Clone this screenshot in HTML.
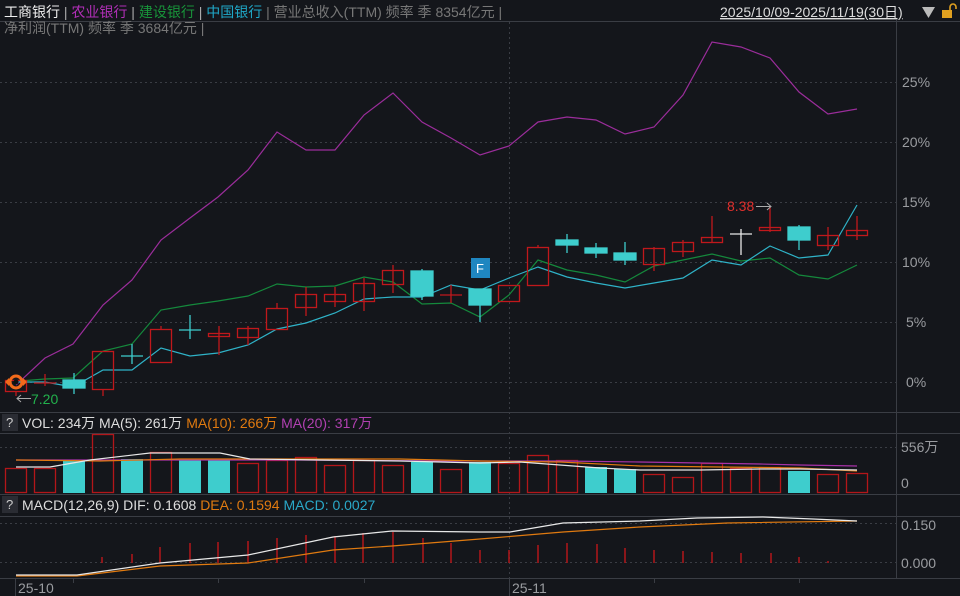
<!DOCTYPE html>
<html><head><meta charset="utf-8"><style>
body{margin:0;background:#14161b;width:960px;height:596px;overflow:hidden;font-family:"Liberation Sans","Noto Sans CJK SC",sans-serif}
.t{position:absolute;white-space:nowrap;font-size:14px;line-height:16px}
</style></head><body>
<svg width="960" height="596" style="position:absolute;left:0;top:0" xmlns="http://www.w3.org/2000/svg" font-family="Liberation Sans, Noto Sans CJK SC, sans-serif">
<rect width="960" height="596" fill="#14161b"/>
<g stroke="#3a3d44" stroke-width="1">
<line x1="896.5" y1="20" x2="896.5" y2="578"/>
<line x1="0" y1="21.5" x2="960" y2="21.5"/>
<line x1="0" y1="412.5" x2="960" y2="412.5"/>
<line x1="0" y1="433.5" x2="960" y2="433.5"/>
<line x1="0" y1="494.5" x2="960" y2="494.5"/>
<line x1="0" y1="516.5" x2="960" y2="516.5"/>
<line x1="0" y1="578.5" x2="960" y2="578.5"/>
<line x1="15.5" y1="578" x2="15.5" y2="596"/>
<line x1="73.5" y1="578" x2="73.5" y2="583"/>
<line x1="218.5" y1="578" x2="218.5" y2="583"/>
<line x1="364.5" y1="578" x2="364.5" y2="583"/>
<line x1="509.5" y1="578" x2="509.5" y2="596"/>
<line x1="654.5" y1="578" x2="654.5" y2="583"/>
<line x1="799.5" y1="578" x2="799.5" y2="583"/>
</g>
<g stroke="#3a3d44" stroke-dasharray="2,3">
<line x1="0" y1="82.5" x2="896" y2="82.5"/><line x1="0" y1="142.5" x2="896" y2="142.5"/>
<line x1="0" y1="202.5" x2="896" y2="202.5"/><line x1="0" y1="262.5" x2="896" y2="262.5"/>
<line x1="0" y1="322.5" x2="896" y2="322.5"/><line x1="0" y1="382.5" x2="896" y2="382.5"/>
<line x1="0" y1="447.5" x2="896" y2="447.5"/>
<line x1="0" y1="523.5" x2="896" y2="523.5"/><line x1="0" y1="562.5" x2="896" y2="562.5"/>
<line x1="509.5" y1="22" x2="509.5" y2="578"/>
</g>
<g fill="#9a9ca0" font-size="14">
<text x="902" y="87">25%</text><text x="902" y="147">20%</text><text x="902" y="207">15%</text>
<text x="902" y="267">10%</text><text x="906" y="327">5%</text><text x="906" y="387">0%</text>
<text x="901" y="452">556万</text><text x="901" y="488">0</text>
<text x="901" y="530">0.150</text><text x="901" y="568">0.000</text>
<text x="18" y="593">25-10</text><text x="512" y="593">25-11</text>
</g>
<!-- lines -->
<polyline fill="none" stroke="#9b2d9b" stroke-width="1.2" points="16,385 45,358 73,344 103,305 132,280 161,240 190,218 218,197 248,170 277,132 306,150 335,150 364,115 393,93 422,122 451,138 480,155 509,146 538,122 567,117 596,120 625,134 654,127 683,95 712,42 741,47 770,58 799,92 828,114 857,109"/>
<polyline fill="none" stroke="#14893c" stroke-width="1.2" points="20,381 45,379 73,378 103,351 132,344 161,310 190,305 218,301 248,296 277,284 306,287 335,286 364,277 393,282 422,304 451,303 480,317 509,295 538,260 567,270 596,275 625,282 654,266 683,260 712,254 741,261 770,258 799,275 828,279 857,265"/>
<polyline fill="none" stroke="#2fb3c8" stroke-width="1.2" points="16,382 45,382 73,387 103,370 132,370 161,348 190,356 218,353 248,345 277,329 306,323 335,313 364,299 393,297 422,297 451,285 480,290 509,278 538,267 567,277 596,283 625,288 654,283 683,278 712,260 741,265 770,246 799,258 828,255 857,205"/>
<!-- candles -->
<g stroke="#c0181c" stroke-width="1.3" fill="none">
<line x1="16" y1="391" x2="16" y2="396"/><rect x="5.5" y="380.5" width="21" height="11"/>
<line x1="45" y1="374" x2="45" y2="386"/><line x1="34" y1="383" x2="56" y2="383"/>
<line x1="103" y1="389" x2="103" y2="396"/><rect x="92.5" y="351.5" width="21" height="38"/>
<line x1="161" y1="326" x2="161" y2="329"/><rect x="150.5" y="329.5" width="21" height="33"/>
<line x1="219" y1="326" x2="219" y2="355"/><rect x="208.5" y="333.5" width="21" height="3"/>
<line x1="248" y1="326" x2="248" y2="345"/><rect x="237.5" y="328.5" width="21" height="9"/>
<line x1="277" y1="303" x2="277" y2="308"/><rect x="266.5" y="308.5" width="21" height="21"/>
<line x1="306" y1="287" x2="306" y2="316"/><rect x="295.5" y="294.5" width="21" height="13"/>
<line x1="335" y1="287" x2="335" y2="307"/><rect x="324.5" y="294.5" width="21" height="7"/>
<line x1="364" y1="278" x2="364" y2="311"/><rect x="353.5" y="283.5" width="21" height="18"/>
<line x1="393" y1="265" x2="393" y2="293"/><rect x="382.5" y="270.5" width="21" height="14"/>
<line x1="451" y1="285" x2="451" y2="303"/><line x1="440" y1="295" x2="462" y2="295"/>
<rect x="498.5" y="285.5" width="21" height="16"/>
<line x1="538" y1="245" x2="538" y2="247"/><rect x="527.5" y="247.5" width="21" height="38"/>
<line x1="654" y1="247" x2="654" y2="271"/><rect x="643.5" y="248.5" width="21" height="16"/>
<line x1="683" y1="240" x2="683" y2="257"/><rect x="672.5" y="242.5" width="21" height="9"/>
<line x1="712" y1="216" x2="712" y2="243"/><rect x="701.5" y="237.5" width="21" height="5"/>
<line x1="770" y1="206" x2="770" y2="232"/><rect x="759.5" y="227.5" width="21" height="3"/>
<line x1="828" y1="227" x2="828" y2="250"/><rect x="817.5" y="235.5" width="21" height="10"/>
<line x1="857" y1="216" x2="857" y2="240"/><rect x="846.5" y="230.5" width="21" height="5"/>
</g>
<g stroke="#3ecdcd" stroke-width="1.3" fill="#3ecdcd">
<line x1="74" y1="373" x2="74" y2="394"/><rect x="63" y="380" width="22" height="8"/>
<line x1="132" y1="344" x2="132" y2="364"/><line x1="121" y1="356" x2="143" y2="356"/>
<line x1="190" y1="315" x2="190" y2="339"/><line x1="179" y1="330" x2="201" y2="330"/>
<line x1="422" y1="269" x2="422" y2="300"/><rect x="411" y="271" width="22" height="25"/>
<line x1="480" y1="289" x2="480" y2="322"/><rect x="469" y="289" width="22" height="16"/>
<line x1="567" y1="234" x2="567" y2="253"/><rect x="556" y="240" width="22" height="5"/>
<line x1="596" y1="243" x2="596" y2="258"/><rect x="585" y="248" width="22" height="5"/>
<line x1="625" y1="242" x2="625" y2="265"/><rect x="614" y="253" width="22" height="7"/>
<line x1="799" y1="225" x2="799" y2="250"/><rect x="788" y="227" width="22" height="13"/>
</g>
<g stroke="#e8e8e8" stroke-width="1.3"><line x1="741" y1="229" x2="741" y2="255"/><line x1="730" y1="234" x2="752" y2="234"/></g>
<rect x="471" y="258" width="19" height="20" fill="#1f86c0"/><text x="476" y="273" fill="#fff" font-size="13">F</text>
<text x="727" y="211" fill="#e0302d" font-size="14">8.38</text>
<path d="M756 206.5H771M767 203l4 3.5-4 3.5" stroke="#aaa" fill="none"/>
<path d="M17 398.5H31M21 395l-4 3.5 4 3.5" stroke="#aaa" fill="none"/>
<text x="31" y="404" fill="#22b14c" font-size="14">7.20</text>
<circle cx="16" cy="382" r="6" fill="none" stroke="#f26a1b" stroke-width="3"/><circle cx="16" cy="382" r="2.5" fill="#111"/>
<path d="M5 382l4-4v8zM27 382l-4-4v8z" fill="#f26a1b"/>
<!-- volume -->
<g stroke="#b3161a" stroke-width="1.3" fill="none">
<rect x="5.5" y="468.5" width="21" height="24"/><rect x="34.5" y="468.5" width="21" height="24"/>
<rect x="92.5" y="434.5" width="21" height="58"/><rect x="150.5" y="452.5" width="21" height="40"/>
<rect x="237.5" y="463.5" width="21" height="29"/><rect x="266.5" y="460.5" width="21" height="32"/>
<rect x="295.5" y="457.5" width="21" height="35"/><rect x="324.5" y="465.5" width="21" height="27"/>
<rect x="353.5" y="460.5" width="21" height="32"/><rect x="382.5" y="465.5" width="21" height="27"/>
<rect x="440.5" y="469.5" width="21" height="23"/><rect x="498.5" y="463.5" width="21" height="29"/>
<rect x="527.5" y="455.5" width="21" height="37"/><rect x="556.5" y="460.5" width="21" height="32"/>
<rect x="643.5" y="474.5" width="21" height="18"/><rect x="672.5" y="477.5" width="21" height="15"/>
<rect x="701.5" y="463.5" width="21" height="29"/><rect x="730.5" y="468.5" width="21" height="24"/>
<rect x="759.5" y="467.5" width="21" height="25"/><rect x="817.5" y="474.5" width="21" height="18"/>
<rect x="846.5" y="473.5" width="21" height="19"/>
</g>
<g fill="#3ecdcd">
<rect x="63" y="460" width="22" height="33"/><rect x="121" y="459" width="22" height="34"/>
<rect x="179" y="459" width="22" height="34"/><rect x="208" y="460" width="22" height="33"/>
<rect x="411" y="462" width="22" height="31"/><rect x="469" y="462" width="22" height="31"/>
<rect x="585" y="467" width="22" height="26"/><rect x="614" y="469" width="22" height="24"/>
<rect x="788" y="471" width="22" height="22"/>
</g>
<polyline fill="none" stroke="#a832a8" stroke-width="1.2" points="16,460 150,460 300,460 450,461 560,461 640,462 700,463 760,464 800,465 857,466"/>
<polyline fill="none" stroke="#e07a10" stroke-width="1.2" points="16,460 100,461 180,459 300,459 400,459 480,461 560,462 640,466 720,467 800,468 857,471"/>
<polyline fill="none" stroke="#e8e8e8" stroke-width="1.2" points="16,467 50,467 90,460 150,453 220,453 250,459 320,460 400,461 480,463 520,462 600,468 640,470 700,470 760,469 800,469 857,470"/>
<!-- macd -->
<g stroke="#b3161a" stroke-width="1.5">
<line x1="102" y1="563" x2="102" y2="557"/><line x1="132" y1="563" x2="132" y2="554"/><line x1="160" y1="563" x2="160" y2="547"/>
<line x1="190" y1="563" x2="190" y2="543"/><line x1="218" y1="563" x2="218" y2="542"/><line x1="248" y1="563" x2="248" y2="541"/>
<line x1="277" y1="563" x2="277" y2="538"/><line x1="306" y1="563" x2="306" y2="535"/><line x1="335" y1="563" x2="335" y2="536"/>
<line x1="363" y1="563" x2="363" y2="533"/><line x1="393" y1="563" x2="393" y2="532"/><line x1="423" y1="563" x2="423" y2="538"/>
<line x1="451" y1="563" x2="451" y2="543"/><line x1="480" y1="563" x2="480" y2="550"/><line x1="509" y1="563" x2="509" y2="550"/>
<line x1="538" y1="563" x2="538" y2="545"/><line x1="567" y1="563" x2="567" y2="543"/><line x1="597" y1="563" x2="597" y2="544"/>
<line x1="625" y1="563" x2="625" y2="548"/><line x1="654" y1="563" x2="654" y2="550"/><line x1="683" y1="563" x2="683" y2="551"/>
<line x1="712" y1="563" x2="712" y2="552"/><line x1="741" y1="563" x2="741" y2="553"/><line x1="771" y1="563" x2="771" y2="553"/>
<line x1="799" y1="563" x2="799" y2="557"/><line x1="828" y1="563" x2="828" y2="561"/>
</g>
<polyline fill="none" stroke="#e07a10" stroke-width="1.2" points="16,576 77,576 160,566 248,563 333,550 392,546 480,539 563,532 640,527 727,523 857,521"/>
<polyline fill="none" stroke="#e8e8e8" stroke-width="1.2" points="16,575 77,575 160,563 248,555 333,537 392,531 480,532 510,532 563,523 640,521 697,518 763,517 813,519 857,521"/>
<!-- labels -->
<rect x="2" y="414" width="16" height="17" fill="#2a2c33"/><text x="6" y="427" fill="#ccc" font-size="13">?</text>
<text x="22" y="428" font-size="14"><tspan fill="#ddd">VOL: 234万 MA(5): 261万 </tspan><tspan fill="#e07a10">MA(10): 266万 </tspan><tspan fill="#b040b0">MA(20): 317万</tspan></text>
<rect x="2" y="496" width="16" height="17" fill="#2a2c33"/><text x="6" y="509" fill="#ccc" font-size="13">?</text>
<text x="22" y="510" font-size="14"><tspan fill="#ddd">MACD(12,26,9) DIF: 0.1608 </tspan><tspan fill="#e07a10">DEA: 0.1594 </tspan><tspan fill="#2aa8c8">MACD: 0.0027</tspan></text>
<text x="4" y="17" font-size="14"><tspan fill="#f0f0f0">工商银行</tspan><tspan fill="#aaa"> | </tspan><tspan fill="#b22fb8">农业银行</tspan><tspan fill="#aaa"> | </tspan><tspan fill="#18943a">建设银行</tspan><tspan fill="#aaa"> | </tspan><tspan fill="#1fa8c8">中国银行</tspan><tspan fill="#777"> | 营业总收入(TTM) 频率 季 8354亿元 |</tspan></text>
<text x="4" y="33" font-size="14" fill="#777">净利润(TTM) 频率 季 3684亿元 |</text>
<text x="720" y="17" font-size="14" fill="#ddd" text-decoration="underline">2025/10/09-2025/11/19(30日)</text>
<path d="M922 7h13l-6.5 11z" fill="#bbb"/>
<rect x="942" y="10" width="10" height="8" fill="#e0a020"/><path d="M950 10v-3a3 3 0 0 1 6 0v2" stroke="#e0a020" stroke-width="1.6" fill="none"/>
</svg>
</body></html>
